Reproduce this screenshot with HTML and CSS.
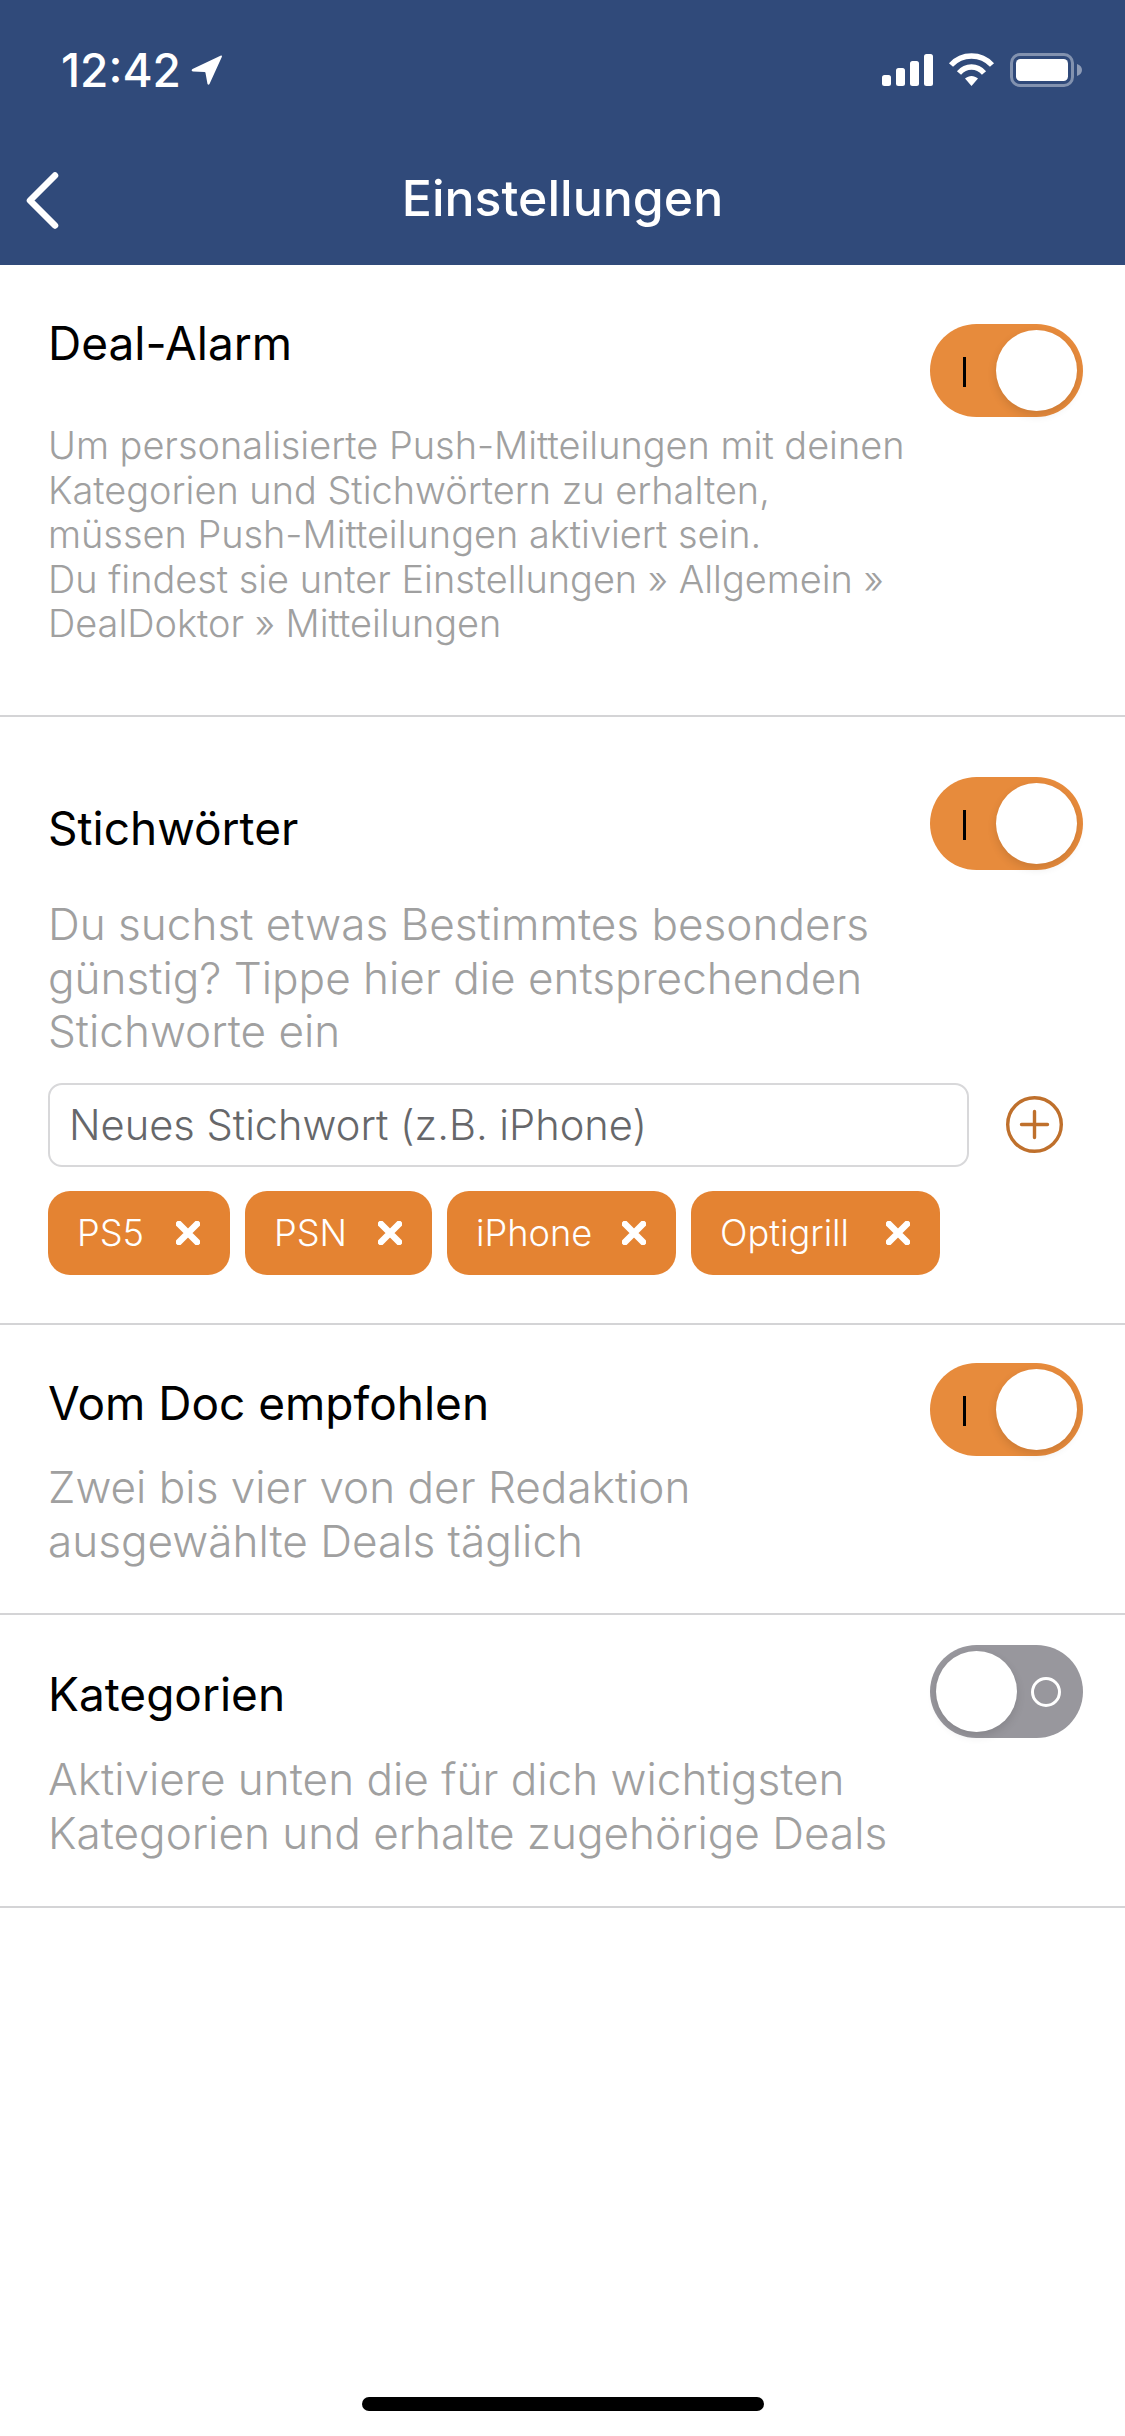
FILE: index.html
```html
<!DOCTYPE html>
<html lang="de">
<head>
    <meta charset="UTF-8">
    <meta name="viewport" content="width=device-width, initial-scale=1.0">
    <title>Einstellungen</title>
    <link rel="stylesheet" href="styles.css">
</head>
<body>
    <header class="kopf">
        <div class="statusbar">
            <div class="zeit">
                <span>12:42</span>
                <svg class="ort" viewBox="0 0 31 30"><path d="M30 .5 L1.500 14 Q-.5 15.500 2 16.500 L13.500 17 Q14.500 17 14.500 18 L16.500 29 Q17.500 30.500 18.500 29 L30.800 2 Q31.300 0 30 .5 Z" fill="#fff"/></svg>
            </div>
            <div class="status-icons">
                <svg class="signal" viewBox="0 0 51 32" fill="#fff">
                    <rect x="0" y="21" width="9" height="11" rx="2.500"/>
                    <rect x="14" y="14" width="9" height="18" rx="2.500"/>
                    <rect x="28" y="7" width="9" height="25" rx="2.500"/>
                    <rect x="42" y="0" width="9" height="32" rx="2.500"/>
                </svg>
                <svg class="wlan" viewBox="0 0 47 34" fill="none" stroke="#fff" stroke-width="5.500">
                    <path d="M3 12 C14 0 33 0 44 12"/>
                    <path d="M11 20 C18 12 29 12 36 20"/>
                    <path d="M23.500 33 L17 25.500 C21 22 26 22 30 25.500 Z" fill="#fff" stroke="none"/>
                </svg>
                <svg class="akku" viewBox="0 0 72 34">
                    <rect x="1.500" y="1.500" width="61" height="31" rx="8.500" fill="none" stroke="#fff" stroke-opacity=".4" stroke-width="3"/>
                    <rect x="6" y="6" width="52" height="22" rx="4.500" fill="#fff"/>
                    <path d="M67 11 C70 12 72 14 72 17 C72 20 70 22 67 23 Z" fill="#fff" fill-opacity=".45"/>
                </svg>
            </div>
        </div>
        <nav class="navbar">
            <svg class="zurueck" viewBox="0 0 34 58" fill="none" stroke="#fff" stroke-width="6.500" stroke-linecap="round" stroke-linejoin="round"><path d="M29 3.500 L4 28.500 L29 53.500"/></svg>
            <h1>Einstellungen</h1>
        </nav>
    </header>

    <main class="inhalt">
        <section class="block block-alarm">
            <div class="zeile">
                <h2>Deal-Alarm</h2>
                <div class="schalter an"><i class="strich"></i><b class="knopf"></b></div>
            </div>
            <p class="hinweis">Um personalisierte Push-Mitteilungen mit deinen<br>Kategorien und Stichwörtern zu erhalten,<br>müssen Push-Mitteilungen aktiviert sein.<br>Du findest sie unter Einstellungen » Allgemein »<br>DealDoktor » Mitteilungen</p>
        </section>

        <section class="block block-stichwort">
            <div class="zeile">
                <h2>Stichwörter</h2>
                <div class="schalter an"><i class="strich"></i><b class="knopf"></b></div>
            </div>
            <p class="text">Du suchst etwas Bestimmtes besonders<br>günstig? Tippe hier die entsprechenden<br>Stichworte ein</p>
            <div class="eingabe">
                <div class="feld">Neues Stichwort (z.B. iPhone)</div>
                <svg class="plus" viewBox="0 0 57 57" fill="none" stroke="#bf702c">
                    <circle cx="28.500" cy="28.500" r="26.800" stroke-width="3.400"/>
                    <path d="M28.500 15.500 V41.500 M15.500 28.500 H41.500" stroke-width="3.400" stroke-linecap="round"/>
                </svg>
            </div>
            <ul class="tags">
                <li class="tag t1">PS5<svg viewBox="0 0 24 24"><path d="M3 3 L21 21 M21 3 L3 21"/></svg></li>
                <li class="tag t2">PSN<svg viewBox="0 0 24 24"><path d="M3 3 L21 21 M21 3 L3 21"/></svg></li>
                <li class="tag t3">iPhone<svg viewBox="0 0 24 24"><path d="M3 3 L21 21 M21 3 L3 21"/></svg></li>
                <li class="tag t4">Optigrill<svg viewBox="0 0 24 24"><path d="M3 3 L21 21 M21 3 L3 21"/></svg></li>
            </ul>
        </section>

        <section class="block block-doc">
            <div class="zeile">
                <h2>Vom Doc empfohlen</h2>
                <div class="schalter an"><i class="strich"></i><b class="knopf"></b></div>
            </div>
            <p class="text">Zwei bis vier von der Redaktion<br>ausgewählte Deals täglich</p>
        </section>

        <section class="block block-kat">
            <div class="zeile">
                <h2>Kategorien</h2>
                <div class="schalter aus"><b class="knopf"></b><i class="ring"></i></div>
            </div>
            <p class="text">Aktiviere unten die für dich wichtigsten<br>Kategorien und erhalte zugehörige Deals</p>
        </section>
    </main>

    <div class="home-leiste"></div>
</body>
</html>
```

FILE: styles.css
```css
* {
    box-sizing: border-box;
}
body {
    margin: 0;
    height: 2436px;
    display: flex;
    flex-direction: column;
    background-color: #fff;
    color: #000;
    font-family: Inter, "Liberation Sans", sans-serif;
}
h1, h2, p, ul {
    margin: 0;
    padding: 0;
}

/* Kopfbereich */
.kopf {
    height: 265px;
    background-color: #304a7a;
    color: #fff;
}
.statusbar {
    display: flex;
    justify-content: space-between;
    align-items: flex-start;
    height: 163px;
    padding: 53px 43px 0 61px;
}
.zeit {
    display: flex;
    align-items: center;
    gap: 10px;
    height: 34px;
    font-size: 46px;
    font-weight: 500;
}
.ort {
    width: 31px;
    height: 30px;
}
.status-icons {
    display: flex;
    align-items: center;
    gap: 15px;
}
.signal {
    width: 51px;
    height: 32px;
}
.wlan {
    width: 47px;
    height: 34px;
}
.akku {
    width: 72px;
    height: 34px;
}
.navbar {
    position: relative;
    display: flex;
    justify-content: center;
    align-items: center;
    height: 72px;
}
.navbar h1 {
    margin-top: -3px;
    font-size: 50px;
    line-height: 72px;
    font-weight: 500;
}
.zurueck {
    position: absolute;
    left: 26px;
    top: 9px;
    width: 34px;
    height: 58px;
}

/* Abschnitte */
.block {
    padding: 0 42px 0 48px;
    border-bottom: 2px solid #d4d4d6;
}
.block-alarm {
    height: 452px;
    padding-top: 50px;
}
.block-stichwort {
    height: 608px;
    padding-top: 60px;
}
.block-doc {
    height: 290px;
    padding-top: 38px;
}
.block-kat {
    height: 293px;
    padding-top: 30px;
}
.zeile {
    display: flex;
    justify-content: space-between;
    align-items: flex-start;
}
h2 {
    font-size: 46px;
    line-height: 56px;
    font-weight: 400;
}
.block-stichwort h2 {
    margin-top: 23px;
}
.block-doc h2 {
    margin-top: 12px;
}
.block-kat h2 {
    margin-top: 21px;
}
.block-alarm .schalter {
    margin-top: 9px;
}
.hinweis {
    margin-top: 6px;
    font-size: 37.900px;
    line-height: 44.600px;
    font-weight: 300;
    color: #a0a0a0;
}
.text {
    margin-top: 28px;
    font-size: 44.100px;
    line-height: 53.500px;
    font-weight: 300;
    color: #a0a0a0;
}
.block-doc .text {
    margin-top: 5px;
}
.block-kat .text {
    margin-top: 15px;
}

/* Schalter */
.schalter {
    display: flex;
    align-items: center;
    flex-shrink: 0;
    width: 153px;
    height: 93px;
    padding: 6px;
    border-radius: 47px;
}
.schalter.an {
    justify-content: flex-end;
    position: relative;
    background-color: #e78b3c;
}
.schalter.aus {
    background-color: #98979d;
}
.knopf {
    width: 81px;
    height: 81px;
    border-radius: 50%;
    background-color: #fff;
    box-shadow: 0 4px 10px rgba(0, 0, 0, 0.12);
}
.strich {
    position: absolute;
    left: 33px;
    top: 33px;
    width: 3px;
    height: 30px;
    background-color: #000;
}
.ring {
    width: 30px;
    height: 30px;
    margin-left: 14px;
    border: 3px solid #fff;
    border-radius: 50%;
}

/* Stichwort-Eingabe */
.eingabe {
    display: flex;
    align-items: center;
    margin-top: 24px;
}
.feld {
    width: 921px;
    height: 84px;
    padding-left: 19px;
    border: 2px solid #d8d8da;
    border-radius: 14px;
    font-size: 41.600px;
    line-height: 80px;
    font-weight: 300;
    color: #66676a;
}
.plus {
    width: 57px;
    height: 57px;
    margin-left: 37px;
}
.tags {
    display: flex;
    gap: 15px;
    margin-top: 24px;
    list-style: none;
}
.tag {
    display: flex;
    justify-content: space-between;
    align-items: center;
    height: 84px;
    padding: 0 30px 0 29px;
    border-radius: 22px;
    background-color: #e48332;
    color: #fff;
    font-size: 36.200px;
    font-weight: 300;
}
.tag svg {
    width: 24px;
    height: 24px;
    fill: none;
    stroke: #fff;
    stroke-width: 6.500;
    stroke-linecap: round;
}
.t1 { width: 182px; }
.t2 { width: 187px; }
.t3 { width: 229px; }
.t4 { width: 249px; }

.inhalt {
    flex: 1;
}
.home-leiste {
    align-self: center;
    flex-shrink: 0;
    width: 402px;
    height: 14px;
    margin-bottom: 25px;
    border-radius: 7px;
    background-color: #000;
}
```
